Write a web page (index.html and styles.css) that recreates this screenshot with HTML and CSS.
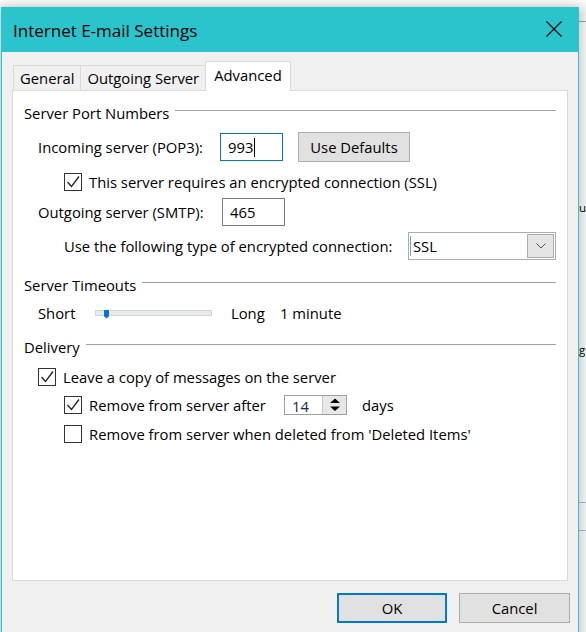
FILE: index.html
```html
<!DOCTYPE html>
<html>
<head>
<meta charset="utf-8">
<title>Internet E-mail Settings</title>
<link rel="stylesheet" href="styles.css">
</head>
<body>
<div class="desktop">
  <div class="bgwin">
    <div class="bg-frag frag-u">u</div>
    <div class="bg-frag frag-g">g</div>
    <div class="bg-rule rule-a"></div>
    <div class="bg-rule rule-b"></div>
  </div>

  <div class="dialog">
    <div class="titlebar">
      <span class="title">Internet E-mail Settings</span>
      <svg class="close" width="16" height="16" viewBox="0 0 16 16">
        <path d="M0.5 0.5 L15.5 15.5 M15.5 0.5 L0.5 15.5" stroke="#000" stroke-width="1.1" fill="none"/>
      </svg>
    </div>

    <div class="client">
      <div class="tabs">
        <div class="tab">General</div>
        <div class="tab">Outgoing Server</div>
        <div class="tab active">Advanced</div>
      </div>

      <div class="panel">
        <div class="group-head first">
          <span class="glabel">Server Port Numbers</span>
          <span class="gline"></span>
        </div>

        <div class="row r-incoming ind1">
          <span class="lbl w-in">Incoming server (POP3):</span>
          <div class="textbox focused"><span>993</span><span class="caret"></span></div>
          <div class="btn defaults">Use Defaults</div>
        </div>

        <div class="row r-ssl ind2">
          <span class="cb checked">
            <svg width="16" height="16" viewBox="0 0 16 16"><polyline points="2.5,8 6.5,12.5 14,2.5" fill="none" stroke="#222" stroke-width="1.3"/></svg>
          </span>
          <span class="cb-text">This server requires an encrypted connection (SSL)</span>
        </div>

        <div class="row r-outgoing ind1">
          <span class="lbl w-out">Outgoing server (SMTP):</span>
          <div class="textbox"><span>465</span></div>
        </div>

        <div class="row r-enc ind2">
          <span class="lbl w-enc">Use the following type of encrypted connection:</span>
          <div class="select">
            <span class="sel-caret"></span>
            <span class="sel-text">SSL</span>
            <span class="sel-btn">
              <svg width="10" height="6" viewBox="0 0 10 6"><polyline points="0.5,0.5 5,5 9.5,0.5" fill="none" stroke="#555" stroke-width="1"/></svg>
            </span>
          </div>
        </div>

        <div class="group-head g2">
          <span class="glabel">Server Timeouts</span>
          <span class="gline"></span>
        </div>

        <div class="row r-slider ind1">
          <span class="lbl w-short">Short</span>
          <div class="track"><span class="thumb"></span></div>
          <span class="lbl w-long">Long</span>
          <span class="lbl">1 minute</span>
        </div>

        <div class="group-head g3">
          <span class="glabel">Delivery</span>
          <span class="gline"></span>
        </div>

        <div class="row r-leave ind1">
          <span class="cb checked">
            <svg width="16" height="16" viewBox="0 0 16 16"><polyline points="2.5,8 6.5,12.5 14,2.5" fill="none" stroke="#222" stroke-width="1.3"/></svg>
          </span>
          <span class="cb-text">Leave a copy of messages on the server</span>
        </div>

        <div class="row r-after ind2">
          <span class="cb checked">
            <svg width="16" height="16" viewBox="0 0 16 16"><polyline points="2.5,8 6.5,12.5 14,2.5" fill="none" stroke="#222" stroke-width="1.3"/></svg>
          </span>
          <span class="cb-text w-after">Remove from server after</span>
          <div class="spinner">
            <span class="spin-text">14</span>
            <span class="spin-btn">
              <svg width="22" height="18" viewBox="0 0 22 18">
                <polygon points="6,7 11,2.5 16,7" fill="#000"/>
                <polygon points="6,10.5 16,10.5 11,15" fill="#000"/>
              </svg>
            </span>
          </div>
          <span class="lbl days">days</span>
        </div>

        <div class="row r-deleted ind2">
          <span class="cb"></span>
          <span class="cb-text">Remove from server when deleted from 'Deleted Items'</span>
        </div>
      </div>

      <div class="buttons">
        <div class="btn ok">OK</div>
        <div class="btn cancel">Cancel</div>
      </div>
    </div>
  </div>
</div>
</body>
</html>
```

FILE: styles.css
```css
html, body {
  margin: 0;
  padding: 0;
}
body {
  width: 586px;
  height: 632px;
  overflow: hidden;
  background: #f2f2f2;
  font-family: "Open Sans", "Noto Sans", sans-serif;
  font-size: 14.8px;
  color: #000;
}
.desktop {
  position: relative;
  width: 586px;
  height: 632px;
  overflow: hidden;
  background: linear-gradient(#fafafa, #ececec 14px, #ececec);
}

/* background window peeking at right edge */
.bgwin {
  position: absolute;
  left: 560px;
  top: 21px;
  width: 26px;
  height: 620px;
  background: #f0f0f0;
  border-top: 1px solid #9a9a9a;
}
.bg-frag {
  padding-left: 19px;
  font-size: 11.5px;
  line-height: 20px;
}
.frag-u { margin-top: 176px; }
.frag-g { margin-top: 122px; }
.bg-rule {
  margin-left: 19px;
  height: 1px;
  background: #a9b5c2;
}
.rule-a { margin-top: 142px; }
.rule-b { margin-top: 27px; }

/* dialog window */
.dialog {
  position: absolute;
  left: 1px;
  top: 7px;
  width: 576px;
  height: 640px;
  background: #f0f0f0;
  border: 1px solid #29c6d1;
  border-top: none;
  box-shadow: 0 0 9px rgba(0,0,0,0.22);
}
.titlebar {
  height: 45px;
  background: #2bc4cc;
  display: flex;
  align-items: center;
  justify-content: space-between;
  padding: 0 16px 0 11px;
}
.title {
  font-size: 17px;
  color: #000;
  margin-top: 1px;
}
.close {
  display: block;
  margin-top: -1px;
}

.client {
  padding-top: 10px;
}
.tabs {
  display: flex;
  align-items: flex-end;
  height: 28px;
  margin-left: 11px;
}
.tab {
  height: 24px;
  line-height: 24px;
  padding: 0 6px;
  border: 1px solid #d9d9d9;
  border-bottom: none;
  background: #f0f0f0;
  margin-left: -1px;
}
.tab:first-child { margin-left: 0; }
.tab.active {
  height: 29px;
  line-height: 27px;
  padding: 0 8px;
  background: #fff;
  margin-bottom: -1px;
  position: relative;
  z-index: 1;
}

.panel {
  margin: 0 10px;
  height: 489px;
  background: #fff;
  border: 1px solid #d9d9d9;
}

.group-head {
  display: flex;
  align-items: center;
  height: 20px;
  margin: 0 11px;
}
.group-head.first { margin-top: 12px; }
.group-head.g2 { margin-top: 15px; }
.group-head.g3 { margin-top: 14px; }
.glabel { white-space: nowrap; }
.gline {
  flex: 1;
  height: 1px;
  background: #a0a0a0;
  margin-left: 6px;
  margin-bottom: 5px;
}

.row {
  display: flex;
  align-items: center;
  white-space: nowrap;
}
.ind1 { padding-left: 25px; }
.ind2 { padding-left: 51px; }

.r-incoming { height: 30px; margin-top: 9px; }
.r-ssl { height: 20px; margin-top: 10px; }
.r-outgoing { height: 28px; margin-top: 6px; }
.r-enc { height: 28px; margin-top: 6px; }
.r-slider { height: 20px; margin-top: 8px; }
.r-leave { height: 20px; margin-top: 10px; }
.r-after { height: 20px; margin-top: 8px; }
.r-deleted { height: 20px; margin-top: 9px; }

.lbl { display: inline-block; }
.w-in { width: 182px; }
.w-out { width: 184px; }
.w-enc { width: 344px; }
.w-short { width: 57px; }
.w-long { width: 49px; margin-left: 19px; }
.w-after { width: 195px; }
.days { margin-left: 15px; }

.textbox {
  box-sizing: border-box;
  width: 63px;
  height: 28px;
  border: 1px solid #7a7a7a;
  background: #fff;
  display: flex;
  align-items: center;
  padding-left: 7px;
}
.textbox.focused {
  border-color: #0078d7;
}
.caret {
  display: inline-block;
  width: 1px;
  height: 19px;
  background: #000;
  margin-left: 1px;
}

.btn {
  box-sizing: border-box;
  height: 30px;
  display: flex;
  align-items: center;
  justify-content: center;
  background: #e1e1e1;
  border: 1px solid #adadad;
}
.defaults {
  width: 112px;
  margin-left: 15px;
}

.cb {
  box-sizing: border-box;
  width: 18px;
  height: 18px;
  border: 1px solid #333;
  background: #fff;
  display: flex;
  align-items: center;
  justify-content: center;
  flex: none;
}
.cb-text { margin-left: 7px; }

.select {
  box-sizing: border-box;
  width: 148px;
  height: 28px;
  border: 1px solid #adadad;
  background: #fff;
  display: flex;
  align-items: center;
}
.sel-caret {
  width: 1px;
  height: 20px;
  background: #6aa8e6;
  margin-left: 1px;
}
.sel-text {
  flex: 1;
  margin-left: 2px;
}
.sel-btn {
  box-sizing: border-box;
  width: 27px;
  height: 24px;
  margin-right: 1px;
  background: #e5e5e5;
  border: 1px solid #adadad;
  display: flex;
  align-items: center;
  justify-content: center;
}

.track {
  box-sizing: border-box;
  width: 117px;
  height: 6px;
  background: #e7eaea;
  border: 1px solid #d6d6d6;
  display: flex;
  align-items: center;
}
.thumb {
  display: block;
  width: 5px;
  height: 9px;
  margin-left: 8px;
  margin-top: 2px;
  background: #0078d7;
  clip-path: polygon(0 0, 100% 0, 100% 75%, 50% 100%, 0 75%);
}

.spinner {
  box-sizing: border-box;
  width: 63px;
  height: 20px;
  border: 1px solid #a0a0a0;
  background: #fff;
  display: flex;
  align-items: stretch;
}
.spin-text {
  flex: 1;
  padding-left: 7px;
  line-height: 20px;
  color: #1c2a48;
}
.spin-btn {
  width: 23px;
  background: #e8e8e8;
  border-left: 1px solid #c8c8c8;
  display: flex;
  align-items: center;
  justify-content: center;
}
.spin-btn svg { display: block; }

.buttons {
  display: flex;
  justify-content: flex-end;
  gap: 12px;
  margin-top: 12px;
  padding-right: 8px;
}
.ok {
  width: 110px;
  border: 2px solid #0078d7;
}
.cancel {
  width: 111px;
}
```
